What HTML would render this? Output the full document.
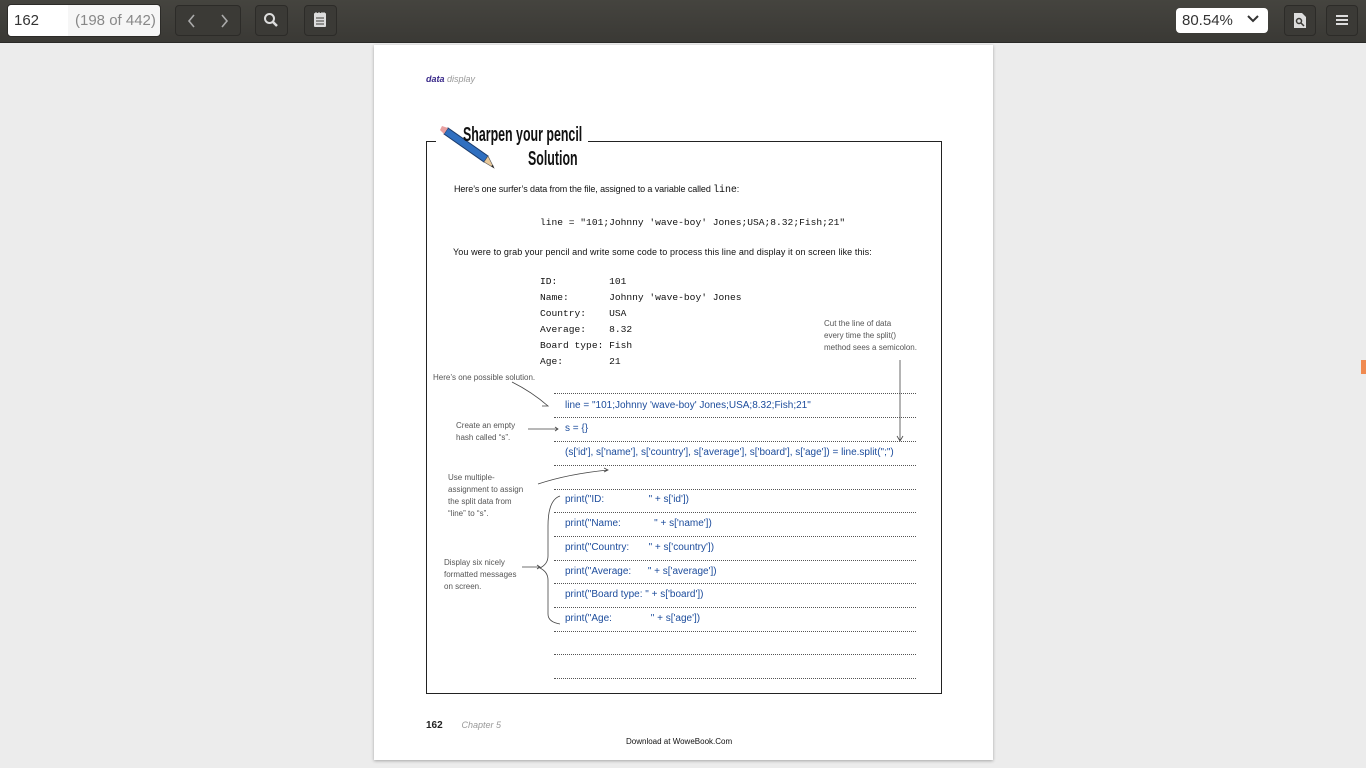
<!DOCTYPE html>
<html><head><style>
body{margin:0;width:1366px;height:768px;background:#ececec;font-family:"Liberation Sans",sans-serif;overflow:hidden;position:relative}
.tb{position:absolute;left:0;top:0;width:1366px;height:42px;background:linear-gradient(#45443f,#3a3935);border-bottom:1px solid #2a2a28}
.btn{position:absolute;top:5px;height:31px;border:1px solid #2c2b28;border-radius:4px;background:#3b3a36;box-sizing:border-box}
.a{position:absolute;white-space:nowrap}
.pg{position:absolute;left:374px;top:45px;width:619px;height:715px;background:#fff;box-shadow:0 1px 3px rgba(0,0,0,.3)}
.dl{position:absolute;left:554px;width:362px;border-top:1px dotted #555}
.h{position:absolute;white-space:pre;color:#1c4c9c;font-size:10px;font-family:"Liberation Sans Narrow","Liberation Sans",sans-serif}
.n{position:absolute;white-space:nowrap;color:#555;font-size:8px;line-height:12px;font-family:"Liberation Sans Narrow","Liberation Sans",sans-serif}
.m{font-family:"Liberation Mono",monospace;font-size:9.6px;position:absolute;white-space:pre;color:#111}
</style></head><body>
<div class="tb">
 <div style="position:absolute;left:7px;top:4px;width:154px;height:33px;background:#f6f6f6;border-radius:4px;border:1px solid #2c2b28;box-sizing:border-box"></div>
 <div style="position:absolute;left:8px;top:5px;width:60px;height:31px;background:#fff;border-radius:4px 0 0 4px"></div>
 <div class="a" style="left:14px;top:12px;font-size:15px;color:#333">162</div>
 <div class="a" style="left:75px;top:12px;font-size:15px;color:#888">(198 of 442)</div>
 <div class="btn" style="left:175px;width:66px"></div>
 <svg class="a" style="left:185px;top:13px" width="46" height="16"><path d="M9 2l-5 6 5 6M37 2l5 6-5 6" fill="none" stroke="#aaa" stroke-width="1.6"/></svg>
 <div class="btn" style="left:255px;width:33px"></div>
 <svg class="a" style="left:263px;top:12px" width="16" height="16"><circle cx="6.5" cy="6.5" r="4.5" fill="none" stroke="#ddd" stroke-width="2"/><path d="M10 10l4 4" stroke="#ddd" stroke-width="2.5"/></svg>
 <div class="btn" style="left:304px;width:33px"></div>
 <svg class="a" style="left:313px;top:11px" width="15" height="18"><rect x="1" y="2" width="12" height="14" rx="1" fill="#ddd"/><path d="M3 7h8M3 10h8M3 13h8" stroke="#3b3a36"/><path d="M3 1v3M6 1v3M9 1v3M11 1v3" stroke="#ddd"/></svg>
 <div style="position:absolute;left:1176px;top:8px;width:92px;height:25px;background:#fff;border-radius:4px"></div>
 <div class="a" style="left:1182px;top:12px;font-size:15px;color:#333">80.54%</div>
 <svg class="a" style="left:1246px;top:14px" width="14" height="10"><path d="M2 2l5 5 5-5" fill="none" stroke="#333" stroke-width="2"/></svg>
 <div class="btn" style="left:1284px;width:32px"></div>
 <svg class="a" style="left:1293px;top:12px" width="14" height="17"><path d="M1 1h8l4 4v11H1z" fill="#ddd"/><circle cx="6" cy="9" r="2.5" fill="none" stroke="#3b3a36" stroke-width="1.5"/><path d="M8 11l3 3" stroke="#3b3a36" stroke-width="1.5"/></svg>
 <div class="btn" style="left:1326px;width:32px"></div>
 <svg class="a" style="left:1335px;top:14px" width="14" height="12"><path d="M1 2h12M1 6h12M1 10h12" stroke="#ddd" stroke-width="2"/></svg>
</div>
<div style="position:absolute;left:1361px;top:360px;width:5px;height:14px;background:#f08a50"></div>
<div class="pg"></div>
<div class="a" style="left:426px;top:74px;font-size:9px;font-style:italic;font-weight:bold;color:#3a2a8a">data <span style="color:#999;font-weight:normal">display</span></div>
<div style="position:absolute;left:426px;top:141px;width:516px;height:553px;border:1.5px solid #222;box-sizing:border-box"></div>
<div style="position:absolute;left:436px;top:124px;width:152px;height:48px;background:#fff"></div>
<svg class="a" style="left:438px;top:124px" width="62" height="46"><path d="M6 10l40 28 4-6-40-28z" fill="#2f6fc0" stroke="#1a3a6a"/><path d="M6 10l4-6-6-2-2 4z" fill="#e9a0a0"/><path d="M46 38l10 6-6-12z" fill="#e8c89a" stroke="#555" stroke-width=".6"/><path d="M53 42l3 2-1-3z" fill="#222"/></svg>
<div class="a" style="left:463px;top:124px;font-size:20px;font-weight:bold;font-family:'Liberation Sans Narrow','Liberation Sans',sans-serif;color:#111;transform:scaleX(.62);transform-origin:left">Sharpen your pencil</div>
<div class="a" style="left:528px;top:148px;font-size:20px;font-weight:bold;font-family:'Liberation Sans Narrow','Liberation Sans',sans-serif;color:#111;transform:scaleX(.62);transform-origin:left">Solution</div>
<div class="a" style="left:454px;top:184px;font-size:9px;color:#111;letter-spacing:-.1px">Here’s one surfer’s data from the file, assigned to a variable called <span style="font-family:'Liberation Mono',monospace;font-size:10px">line</span>:</div>
<div class="m" style="left:540px;top:217px">line = "101;Johnny 'wave-boy' Jones;USA;8.32;Fish;21"</div>
<div class="a" style="left:453px;top:247px;font-size:9px;color:#111;letter-spacing:.1px">You were to grab your pencil and write some code to process this line and display it on screen like this:</div>
<div class="m" style="left:540px;top:274px;line-height:16px">ID:         101
Name:       Johnny 'wave-boy' Jones
Country:    USA
Average:    8.32
Board type: Fish
Age:        21</div>
<div class="n" style="left:824px;top:318px">Cut the line of data<br>every time the split()<br>method sees a semicolon.</div>
<div class="n" style="left:433px;top:372px">Here’s one possible solution.</div>
<div class="n" style="left:456px;top:420px">Create an empty<br>hash called “s”.</div>
<div class="n" style="left:448px;top:472px">Use multiple-<br>assignment to assign<br>the split data from<br>“line” to “s”.</div>
<div class="n" style="left:444px;top:557px">Display six nicely<br>formatted messages<br>on screen.</div>
<svg class="a" style="left:420px;top:350px" width="520" height="290" fill="none" stroke="#444" stroke-width="0.8"><path d="M92 32q20 10 36 24M123 52l5 4-6 0"/><path d="M108 79h30M135 77l3 2-3 2"/><path d="M118 134q30-10 70-14M184 118l4 2-4 2"/><path d="M480 10v80M477 86l3 5 3-5"/><path d="M140 146q-12 4-12 30v30q0 8-8 12q8 4 8 12v34q0 8 12 10"/><path d="M102 217h18M117 215l3 2-3 2"/></svg>
<div class="dl" style="top:393px"></div><div class="dl" style="top:417px"></div><div class="dl" style="top:441px"></div><div class="dl" style="top:465px"></div><div class="dl" style="top:489px"></div><div class="dl" style="top:512px"></div><div class="dl" style="top:536px"></div><div class="dl" style="top:560px"></div><div class="dl" style="top:583px"></div><div class="dl" style="top:607px"></div><div class="dl" style="top:631px"></div><div class="dl" style="top:654px"></div><div class="dl" style="top:678px"></div>
<div class="h" style="left:565px;top:400px">line = "101;Johnny 'wave-boy' Jones;USA;8.32;Fish;21"</div>
<div class="h" style="left:565px;top:423px">s = {}</div>
<div class="h" style="left:565px;top:447px">(s['id'], s['name'], s['country'], s['average'], s['board'], s['age']) = line.split(";")</div>
<div class="h" style="left:565px;top:494px">print("ID:                " + s['id'])</div>
<div class="h" style="left:565px;top:518px">print("Name:            " + s['name'])</div>
<div class="h" style="left:565px;top:542px">print("Country:       " + s['country'])</div>
<div class="h" style="left:565px;top:566px">print("Average:      " + s['average'])</div>
<div class="h" style="left:565px;top:589px">print("Board type: " + s['board'])</div>
<div class="h" style="left:565px;top:613px">print("Age:              " + s['age'])</div>
<div class="a" style="left:426px;top:720px;font-size:10px;font-weight:bold;color:#222">162 <span style="font-weight:normal;font-style:italic;color:#999;font-size:9px;margin-left:16px">Chapter 5</span></div>
<div class="a" style="left:626px;top:737px;font-size:8px;color:#111">Download at WoweBook.Com</div>
</body></html>
